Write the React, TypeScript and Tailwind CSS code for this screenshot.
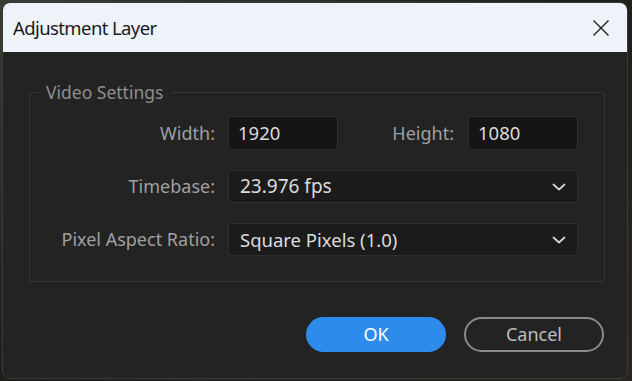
import React from "react";

const Chevron = () => (
  <svg width="14" height="8" viewBox="0 0 14 8" fill="none">
    <path d="M1.5 1.5 L7 6.5 L12.5 1.5" stroke="#d4d4d4" strokeWidth="1.8" strokeLinecap="round" strokeLinejoin="round" />
  </svg>
);

export default function App() {
  const font = { fontFamily: '"Noto Sans", "Open Sans", sans-serif' };
  return (
    <div
      className="w-[632px] h-[381px] overflow-hidden bg-gradient-to-br from-[#3a3d33] via-[#1e1f1b] to-[#2a2622] pt-[2px] pl-[2px]"
      style={font}
    >
      <div className="w-[626px] h-[377px] rounded-[8px] border border-[#3a3a3a] overflow-hidden flex flex-col bg-[#232323]">
        <div className="h-[49px] bg-[#eef3f9] flex items-center justify-between pl-[10px] pr-[18px]">
          <span className="text-[18.5px] text-[#1a1a1a] tracking-[-0.6px]">Adjustment Layer</span>
          <svg width="16" height="16" viewBox="0 0 16 16" fill="none">
            <path d="M0.5 0.5 L15.5 15.5 M15.5 0.5 L0.5 15.5" stroke="#1f1f1f" strokeWidth="1.4" />
          </svg>
        </div>
        <div className="flex-1 flex flex-col pl-[26px] pr-[22px] pt-[29px]">
          <fieldset className="border border-[#363636] rounded-[2px] pb-[25px] pt-[13px]">
            <legend className="ml-[8px] px-[8px] text-[17.5px] text-[#8e8e8e] leading-[22px]">Video Settings</legend>
            <div className="grid grid-cols-[185px_350px] gap-x-[13px] gap-y-[20px] items-center text-[18px]">
              <span className="text-right text-[#a0a0a0]">Width:</span>
              <div className="flex items-center">
                <div className="w-[110px] h-[34px] bg-[#151515] border border-[#2f2f2f] rounded-[3px] flex items-center pl-[9px] text-[18.5px] text-[#dcdcdc]">1920</div>
                <span className="flex-1 text-right pr-[14px] text-[#a0a0a0]">Height:</span>
                <div className="w-[110px] h-[34px] bg-[#151515] border border-[#2f2f2f] rounded-[3px] flex items-center pl-[9px] text-[18.5px] text-[#dcdcdc]">1080</div>
              </div>
              <span className="text-right text-[#a0a0a0]">Timebase:</span>
              <div className="h-[33px] bg-[#1b1b1b] border border-[#2f2f2f] rounded-[2px] flex items-center justify-between pl-[11px] pr-[11px] text-[19px] text-[#dcdcdc]">
                <span>23.976 fps</span>
                <Chevron />
              </div>
              <span className="text-right text-[#a0a0a0]">Pixel Aspect Ratio:</span>
              <div className="h-[33px] bg-[#1b1b1b] border border-[#2f2f2f] rounded-[2px] flex items-center justify-between pl-[11px] pr-[11px] text-[18.5px] text-[#dcdcdc]">
                <span>Square Pixels (1.0)</span>
                <Chevron />
              </div>
            </div>
          </fieldset>
          <div className="flex justify-end gap-[18px] mt-[35px] pr-[1px]">
            <button className="w-[140px] h-[35px] rounded-full bg-[#2d8ceb] text-white text-[18px]">OK</button>
            <button className="w-[140px] h-[35px] rounded-full border-2 border-[#8a8a8a] text-[#bdbdbd] text-[18px]">Cancel</button>
          </div>
        </div>
      </div>
    </div>
  );
}
